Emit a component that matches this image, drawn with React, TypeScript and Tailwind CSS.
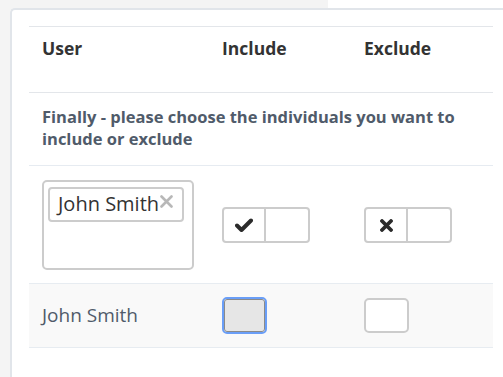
import React from "react";

function Check() {
  return (
    <svg width="18" height="14" viewBox="0 0 18 14">
      <path d="M2 7.5 L6.5 12 L16 2.5" fill="none" stroke="#2b2b2b" strokeWidth="4" strokeLinecap="round" strokeLinejoin="round" />
    </svg>
  );
}

function Cross() {
  return (
    <svg width="13" height="13" viewBox="0 0 13 13">
      <path d="M2 2 L11 11 M11 2 L2 11" fill="none" stroke="#2b2b2b" strokeWidth="3.8" strokeLinecap="round" />
    </svg>
  );
}

function TagX() {
  return (
    <svg width="13" height="13" viewBox="0 0 13 13">
      <path d="M1.5 1.5 L11.5 11.5 M11.5 1.5 L1.5 11.5" fill="none" stroke="#b8b8b8" strokeWidth="2.6" strokeLinecap="round" />
    </svg>
  );
}

export default function App() {
  return (
    <div className="w-[503px] h-[377px] overflow-hidden bg-white flex flex-col" style={{ fontFamily: '"Open Sans", sans-serif' }}>
      <div className="flex h-[8px] shrink-0">
        <div className="w-[328px] bg-[#f4f4f4]" />
        <div className="flex-1 bg-white" />
      </div>
      <div className="flex-1 flex bg-[#f4f4f4] min-h-0">
        <div className="ml-[10px] w-[600px] shrink-0 bg-white border-l-2 border-t-2 border-[#e1e5ea] rounded-tl-[5px] pt-[16px] pl-[17px]">
          <div className="w-[464px]">
            {/* header */}
            <div className="flex h-[67px] border-t border-b border-[#e3e6ea] pt-[9px] text-[17.5px] leading-[24px] font-bold text-[#333]">
              <div className="w-[193px] pl-[13px]">User</div>
              <div className="w-[142px]">Include</div>
              <div>Exclude</div>
            </div>
            {/* instruction */}
            <div className="h-[73px] border-b border-[#e6ebf1] pl-[13px] pt-[13px] text-[16.5px] leading-[22px] font-bold text-[#505b6a] whitespace-nowrap">
              Finally - please choose the individuals you want to
              <br />
              include or exclude
            </div>
            {/* selector row */}
            <div className="flex items-center h-[117px]">
              <div className="w-[193px] pl-[13px]">
                <div className="w-[152px] h-[90px] border-2 border-[#cccccc] rounded-[5px] pt-[5px] pl-[4px]">
                  <div className="w-[136px] h-[35px] border-2 border-[#cccccc] rounded-[4px] flex items-center pl-[8px] text-[20px] text-[#333] leading-none">
                    <span>John Smith</span>
                    <span className="ml-[1px] mt-[-6px]">
                      <TagX />
                    </span>
                  </div>
                </div>
              </div>
              <div className="w-[142px]">
                <div className="w-[88px] h-[36px] border-2 border-[#cccccc] rounded-[4px] flex">
                  <div className="w-[42px] h-full border-r-2 border-[#cccccc] flex items-center justify-center">
                    <Check />
                  </div>
                  <div className="flex-1" />
                </div>
              </div>
              <div>
                <div className="w-[88px] h-[36px] border-2 border-[#cccccc] rounded-[4px] flex">
                  <div className="w-[42px] h-full border-r-2 border-[#cccccc] flex items-center justify-center pt-[2px]">
                    <Cross />
                  </div>
                  <div className="flex-1" />
                </div>
              </div>
            </div>
            {/* person row */}
            <div className="flex items-center h-[65px] bg-[#f9f9f9] border-t border-b border-[#e7ecf1]">
              <div className="w-[193px] pl-[13px] text-[19px] text-[#505b6a]">John Smith</div>
              <div className="w-[142px]">
                <div className="w-[45px] h-[37px] rounded-[5px] border-2 border-[#6a9ef7] p-0">
                  <div className="w-full h-full rounded-[3px] border border-[#8a8a8a] bg-[#e6e6e6]" />
                </div>
              </div>
              <div>
                <div className="w-[45px] h-[35px] rounded-[5px] border-2 border-[#cccccc] bg-white" />
              </div>
            </div>
          </div>
        </div>
      </div>
    </div>
  );
}
